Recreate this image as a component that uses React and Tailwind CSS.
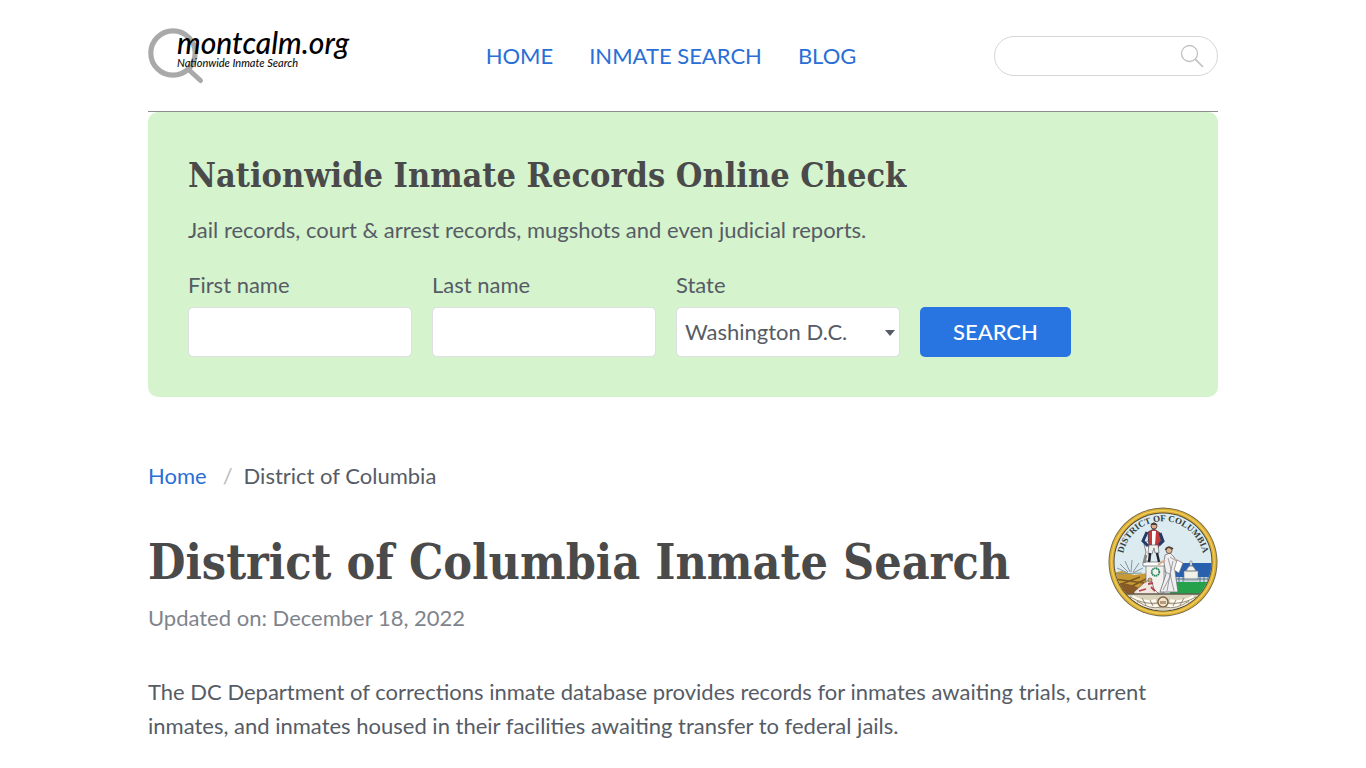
import React from "react";

const link = "text-[#2a6fd6] hover:underline";
const field =
  "h-[50px] w-full rounded-[5px] border border-[#dcdfe3] bg-white px-2 text-[#565c66] outline-none focus:border-[#2874e1]";

function Logo() {
  return (
    <a href="#" aria-label="montcalm.org, Nationwide Inmate Search" className="block">
      <svg width="200" height="56" viewBox="0 0 200 56" className="block overflow-visible">
        <circle cx="25" cy="25" r="22.2" fill="none" stroke="#a9a9a9" strokeWidth="5.2" />
        <path d="M40.500 41.500L52.500 52.500" stroke="#a9a9a9" strokeWidth="5" strokeLinecap="round" />
        <text x="29" y="26" fill="#000" className="font-['Lato',sans-serif] text-[30px] font-medium italic">
          montcalm.org
        </text>
        <text x="29" y="39" fill="#111" className="font-['Lato',sans-serif] text-[11px] font-medium italic">
          Nationwide Inmate Search
        </text>
      </svg>
    </a>
  );
}

function Seal() {
  return (
    <svg viewBox="0 0 110 110" role="img" aria-label="Seal of the District of Columbia" className="block size-[110px] shrink-0">
      <defs>
        <clipPath id="disc">
          <circle cx="55" cy="55" r="48.500" />
        </clipPath>
        <path id="arc" d="M14.800 62A40.800 40.800 0 1 1 95.200 62" />
      </defs>
      <circle cx="55" cy="55" r="54.500" fill="#6d6748" />
      <circle cx="55" cy="55" r="53.600" fill="#dcae32" />
      <circle cx="55" cy="55" r="51.300" fill="none" stroke="#f0cf62" strokeWidth="1.200" />
      <circle cx="55" cy="55" r="49.400" fill="#4e4a3a" />
      <g clipPath="url(#disc)">
        <path d="M0 0H110V110H0Z" fill="#dcebf0" />
        <path d="M62 56H110V76H62Z" fill="#2860ae" />
        <path d="M62 76L72 73L88 75L110 74V90H62Z" fill="#25a14b" />
        <path d="M0 67L14 64L26 68L40 66V92H0Z" fill="#c79a34" />
        <path d="M6 72L36 76M8 79L32 70M12 85L38 72" stroke="#79551f" strokeWidth="1.500" />
        <path d="M5 78Q18 73 34 83V91H5Z" fill="#875a28" />
        <path d="M8 67L34 66M12 57L20 65M17 54L22 65M24 53L23 65M31 56L25 65M9 61L20 66M35 61L25 66" stroke="#83949a" strokeWidth="1" />
        <path d="M68 70H104V75H68Z" fill="#cbd8dc" />
        <path d="M76 64H90V73H76ZM78 64Q83 53 88 64ZM82 54H84V59H82Z" fill="#f2f1e8" stroke="#6d7886" strokeWidth=".6" />
        <path d="M68 72H104M71 70V75M75 70V75M92 70V75M96 70V75M100 70V75" stroke="#405f82" strokeWidth=".8" />
        <path d="M38 58H56V86H38Z" fill="#f2f1ed" stroke="#747474" strokeWidth=".7" />
        <path d="M35 55H59V59H35Z" fill="#fff" stroke="#666" strokeWidth=".7" />
        <circle cx="47.500" cy="65" r="3.800" fill="none" stroke="#28845b" strokeWidth="1.800" strokeDasharray="1.500 .5" />
        <path d="M36 37L41 33L44 39L42 54H36L38 45Z" fill="#f5f5f3" stroke="#555" strokeWidth=".7" />
        <path d="M38 48L36 56" stroke="#888" strokeWidth="3" />
        <path d="M40 25L46 22L52 26L53 35L50 41H41Z" fill="#c63739" stroke="#3c3440" strokeWidth=".8" />
        <path d="M39 25L35 34L40 39M52 26L55 34L51 38" fill="none" stroke="#243a68" strokeWidth="3" />
        <path d="M44 24L48 24L47 38H44Z" fill="#fff" />
        <path d="M41 38H50L51 46H47L46 41L44 47H40Z" fill="#edf0ed" stroke="#4b4f57" strokeWidth=".6" />
        <path d="M42 46L41 55M49 46L51 55" stroke="#242934" strokeWidth="2.400" />
        <circle cx="46" cy="19" r="3" fill="#dfab88" stroke="#3c3532" strokeWidth=".8" />
        <path d="M42.500 18Q45 13 49.500 18" fill="#45403d" />
        <path d="M57 48L62 46L66 50L71 59L67 64L70 85H52L58 67L56 56Z" fill="#efeff0" stroke="#6f6f74" strokeWidth=".8" />
        <path d="M60 51L63 62L59 84M65 54L62 67L66 84M56 64L63 68L55 83M62 50L70 55" fill="none" stroke="#898990" strokeWidth=".8" />
        <path d="M57 53L50 58M67 52L72 57" stroke="#d9af93" strokeWidth="2" />
        <path d="M69 53L75 56L71 66L66 63Z" fill="#fff" stroke="#777" strokeWidth=".7" />
        <circle cx="61" cy="43.500" r="3" fill="#dfb695" stroke="#514840" strokeWidth=".8" />
        <path d="M57.500 43Q59 38 65 42" fill="none" stroke="#4c4237" strokeWidth="1.700" />
        <path d="M26 85L36 76L43 72L46 82L51 87L44 89H26Z" fill="#f3e6df" stroke="#67544b" strokeWidth=".7" />
        <circle cx="42" cy="73" r="2" fill="#d9a984" stroke="#5a463a" strokeWidth=".6" />
        <path d="M40 77L45 76M31 84L38 82M43 80L47 84" stroke="#ae4453" strokeWidth="1.800" />
        <path d="M8 87H102V110H8Z" fill="#d9d2bd" />
        <path d="M17 87H93" stroke="#625b4f" strokeWidth="1.500" />
        <path d="M24 90Q35 97 48 94M86 90Q75 97 62 94M31 95Q43 101 51 99M79 95Q67 101 59 99" fill="none" stroke="#fffbed" strokeWidth="4" />
        <path d="M22 90Q36 98 50 96M88 90Q74 98 60 96M29 94Q42 103 53 100M81 94Q68 103 57 100M34 91L38 98M42 93L45 99M76 91L72 98M68 93L65 99" fill="none" stroke="#796d60" strokeWidth=".8" />
        <circle cx="55" cy="95" r="5" fill="#efe5cd" stroke="#806648" strokeWidth="1.500" />
        <path d="M52 97V94H58V97Z" fill="#b99b79" />
      </g>
      <text fill="#303e43" className="font-['Liberation_Serif',serif] text-[9px] font-bold">
        <textPath href="#arc" startOffset="50%" textAnchor="middle">DISTRICT OF COLUMBIA</textPath>
      </text>
    </svg>
  );
}

function Field({ id, label, children }) {
  return (
    <div className="w-full sm:w-56">
      <label htmlFor={id} className="mb-[5px] block">{label}</label>
      {children}
    </div>
  );
}

export default function App() {
  return (
    <div className="min-h-screen bg-white px-4 font-['Lato',sans-serif] text-[22px] leading-[34px] text-[#565c66]">
      <div className="mx-auto max-w-[1070px]">
        <header className="flex flex-wrap items-center justify-between gap-4 border-b border-[#8b8f8b] pt-7 pb-[27px]">
          <Logo />
          <nav className="flex flex-wrap gap-9 uppercase">
            <a href="#" className={link}>Home</a>
            <a href="#" className={link}>Inmate Search</a>
            <a href="#" className={link}>Blog</a>
          </nav>
          <form className="flex h-10 w-56 items-center rounded-full border border-[#d4d6d8] pr-3 pl-4" onSubmit={(e) => e.preventDefault()}>
            <input type="search" aria-label="Search the site" className="w-full min-w-0 bg-transparent text-base outline-none" />
            <button type="submit" aria-label="Search" className="shrink-0">
              <svg width="25" height="25" viewBox="0 0 25 25" fill="none" stroke="#bfc1c3" className="block">
                <circle cx="9.500" cy="9.500" r="8" strokeWidth="1.300" />
                <path d="M15.200 15.200L23 23" strokeWidth="1.700" />
              </svg>
            </button>
          </form>
        </header>

        <main>
          <section className="rounded-[10px] bg-[#d5f3cd] p-10">
            <h2 className="mb-[15px] font-['DejaVu_Serif_Condensed','DejaVu_Serif',serif] text-[34px] leading-[46px] font-bold text-[#4a4a4a]">
              Nationwide Inmate Records Online Check
            </h2>
            <p className="mb-[21px]">Jail records, court &amp; arrest records, mugshots and even judicial reports.</p>
            <form className="flex flex-wrap items-end gap-5" onSubmit={(e) => e.preventDefault()}>
              <Field id="first" label="First name">
                <input id="first" type="text" className={field} />
              </Field>
              <Field id="last" label="Last name">
                <input id="last" type="text" className={field} />
              </Field>
              <Field id="state" label="State">
                <div className="relative">
                  <select id="state" className={`${field} appearance-none`} defaultValue="dc">
                    <option value="dc">Washington D.C.</option>
                    <option value="md">Maryland</option>
                    <option value="va">Virginia</option>
                  </select>
                  <svg width="10" height="6" viewBox="0 0 10 6" className="pointer-events-none absolute top-[23px] right-[5px]">
                    <path d="M0 0H10L5 6Z" fill="#565c66" />
                  </svg>
                </div>
              </Field>
              <button type="submit" className="h-[50px] rounded-[5px] bg-[#2874e1] px-[33px] font-medium text-white uppercase">
                Search
              </button>
            </form>
          </section>

          <nav aria-label="Breadcrumb" className="mt-[62px]">
            <ol className="flex flex-wrap">
              <li><a href="#" className={link}>Home</a></li>
              <li aria-hidden="true" className="pr-[11px] pl-4 text-[#b9bcc0]">/</li>
              <li aria-current="page">District of Columbia</li>
            </ol>
          </nav>

          <div className="mt-[14px] flex items-start justify-between gap-6">
            <div className="pt-6">
              <h1 className="font-['DejaVu_Serif_Condensed','DejaVu_Serif',serif] text-[48px] leading-[62px] font-bold text-[#4a4a4a]">
                District of Columbia Inmate Search
              </h1>
              <p className="mt-2 text-[#7f848c]">Updated on: December 18, 2022</p>
            </div>
            <Seal />
          </div>

          <p className="mt-10">
            The DC Department of corrections inmate database provides records for inmates awaiting trials, current
            inmates, and inmates housed in their facilities awaiting transfer to federal jails.
          </p>
        </main>
      </div>
    </div>
  );
}
